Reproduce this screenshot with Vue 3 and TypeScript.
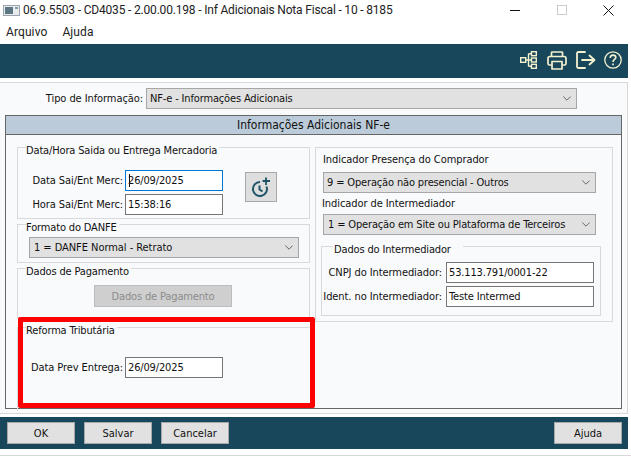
<script setup lang="ts">
const menus: string[] = ['Arquivo', 'Ajuda']
</script>

<template>
  <div class="win">
    <header class="titlebar">
      <svg class="appicon" width="17" height="11" viewBox="0 0 17 11">
        <rect x="0.5" y="0.5" width="16" height="10" fill="#e8ecef" stroke="#9aa4aa" />
        <rect x="2" y="2" width="8" height="7" fill="#5d7683" />
        <rect x="12" y="2" width="3" height="2" fill="#8a9aa3" />
      </svg>
      <span class="title">06.9.5503 - CD4035 - 2.00.00.198 - Inf Adicionais Nota Fiscal - 10 - 8185</span>
      <div class="controls">
        <svg width="11" height="11" viewBox="0 0 11 11"><path d="M0 5.5H10" stroke="#111" fill="none" /></svg>
        <svg width="10" height="10" viewBox="0 0 10 10"><rect x="0.5" y="0.5" width="9" height="9" stroke="#ccc" fill="none" /></svg>
        <svg width="11" height="11" viewBox="0 0 11 11"><path d="M0.5 0.5L10.5 10.5M10.5 0.5L0.5 10.5" stroke="#111" fill="none" /></svg>
      </div>
    </header>

    <nav class="menu">
      <span v-for="m in menus" :key="m">{{ m }}</span>
    </nav>

    <div class="toolbar">
      <svg class="ic-map" width="17" height="18" viewBox="0 0 17 18" fill="none" stroke="#f4f1cf" stroke-width="1.4">
        <rect x="0.7" y="6.7" width="5" height="4.6" />
        <rect x="11.5" y="0.7" width="4.8" height="4" />
        <rect x="11.5" y="7" width="4.8" height="4" />
        <rect x="11.5" y="13.3" width="4.8" height="4" />
        <path d="M5.7 9H11.5M8.5 2.7V15.3M8.5 2.7H11.5M8.5 15.3H11.5" />
      </svg>
      <svg class="ic-print" width="20" height="19" viewBox="0 0 20 19" fill="none" stroke="#f4f1cf" stroke-width="1.7" stroke-linejoin="round">
        <path d="M4.5 5.5V1.5Q4.5 1 5 1H15Q15.5 1 15.5 1.5V5.5" />
        <path d="M4.5 14H2.5Q1 14 1 12.500V7.500Q1 5.500 3 5.500H17Q19 5.500 19 7.500V12.500Q19 14 17.500 14H15.500" />
        <rect x="5" y="10.500" width="10" height="7.500" />
      </svg>
      <svg width="20" height="18" viewBox="0 0 20 18" fill="none" stroke="#f4f1cf" stroke-width="1.8" stroke-linecap="round" stroke-linejoin="round">
        <path d="M9 1H2.500Q1 1 1 2.500V15.500Q1 17 2.500 17H9" />
        <path d="M6 9H18M13.500 4.500L18.500 9L13.500 13.500" />
      </svg>
      <svg width="18" height="18" viewBox="0 0 18 18" fill="none" stroke="#f4f1cf" stroke-width="1.3">
        <circle cx="9" cy="9" r="8.200" />
        <path d="M6.200 7Q6.300 4.100 9 4.100Q11.800 4.100 11.800 6.500C11.800 8.500 9 8.500 9 11" stroke-width="1.600" />
        <path d="M9 12.500V14.300" stroke-width="1.700" />
      </svg>
    </div>

    <main class="body">
      <div class="tipo">
        <label>Tipo de Informação:</label>
        <div class="combo combo-tipo">
          <span>NF-e - Informações Adicionais</span>
          <svg class="chev" width="8" height="5" viewBox="0 0 8 5"><path d="M0.300 0.500L4 4.200L7.700 0.500" /></svg>
        </div>
      </div>

      <section class="panel">
        <h2 class="panel-head">Informações Adicionais NF-e</h2>
        <div class="columns">
          <div class="col-left">
            <div class="group g-data">
              <span class="legend">Data/Hora Saida ou Entrega Mercadoria</span>
              <div class="data-fields">
                <div class="field">
                  <label>Data Sai/Ent Merc:</label>
                  <div class="input focused"><i class="caret"></i>26/09/2025</div>
                </div>
                <div class="field">
                  <label>Hora Sai/Ent Merc:</label>
                  <div class="input">15:38:16</div>
                </div>
              </div>
              <button class="clock-btn" type="button" aria-label="Agora">
                <svg width="20" height="20" viewBox="0 0 20 20" fill="none" stroke="#1e5468" stroke-width="2">
                  <path d="M15.500 9.500A7 7 0 1 1 9 5" />
                  <path d="M8.500 8.500V12.500L11.500 14.500" />
                  <path d="M15 0.500V8M11.500 4H19" stroke-width="1.800" />
                </svg>
              </button>
            </div>

            <div class="group g-formato">
              <span class="legend">Formato do DANFE</span>
              <div class="combo combo-formato">
                <span>1 = DANFE Normal - Retrato</span>
                <svg class="chev" width="8" height="5" viewBox="0 0 8 5"><path d="M0.300 0.500L4 4.200L7.700 0.500" /></svg>
              </div>
            </div>

            <div class="group g-pag">
              <span class="legend">Dados de Pagamento</span>
              <button class="btn-disabled" type="button" disabled>Dados de Pagamento</button>
            </div>

            <div class="group g-reforma">
              <span class="legend">Reforma Tributária</span>
              <div class="field field-reforma">
                <label>Data Prev Entrega:</label>
                <div class="input">26/09/2025</div>
              </div>
            </div>
            <div class="highlight"></div>
          </div>

          <div class="group g-right">
            <label class="cap cap1">Indicador Presença do Comprador</label>
            <div class="combo combo-right">
              <span>9 = Operação não presencial - Outros</span>
              <svg class="chev" width="8" height="5" viewBox="0 0 8 5"><path d="M0.300 0.500L4 4.200L7.700 0.500" /></svg>
            </div>
            <label class="cap cap2">Indicador de Intermediador</label>
            <div class="combo combo-right combo-site">
              <span>1 = Operação em Site ou Plataforma de Terceiros</span>
              <svg class="chev" width="8" height="5" viewBox="0 0 8 5"><path d="M0.300 0.500L4 4.200L7.700 0.500" /></svg>
            </div>
            <div class="group g-inter">
              <span class="legend">Dados do Intermediador</span>
              <div class="field inter-field">
                <label>CNPJ do Intermediador:</label>
                <div class="input wide">53.113.791/0001-22</div>
              </div>
              <div class="field inter-field">
                <label>Ident. no Intermediador:</label>
                <div class="input wide">Teste Intermed</div>
              </div>
            </div>
          </div>
        </div>
      </section>
    </main>

    <footer class="footer">
      <button class="btn" type="button">OK</button>
      <button class="btn" type="button">Salvar</button>
      <button class="btn" type="button">Cancelar</button>
      <button class="btn btn-help" type="button">Ajuda</button>
    </footer>
  </div>
</template>

<style>
html, body { margin: 0; background: #fff; overflow: hidden; }
</style>

<style scoped>
.win {
  width: 631px;
  height: 456px;
  box-sizing: border-box;
  border-bottom: 1px solid #d8d8d8;
  background: #fff;
  font-family: "DejaVu Sans Condensed", "DejaVu Sans", sans-serif;
  font-size: 11px;
  letter-spacing: -0.15px;
  color: #111;
  overflow: hidden;
}
label { white-space: nowrap; letter-spacing: -0.08px; }
.titlebar { height: 20px; display: flex; align-items: center; padding-left: 3px; }
.title { margin-left: 3px; font-family: Roboto, sans-serif; font-size: 12px; letter-spacing: -0.18px; color: #222; white-space: nowrap; }
.controls { margin-left: auto; display: flex; align-items: center; padding-right: 17px; gap: 36px; }
.menu { height: 23px; display: flex; align-items: center; gap: 15px; padding-left: 6px; font-family: Roboto, sans-serif; font-size: 12px; letter-spacing: 0.1px; color: #222; }
.toolbar {
  width: 628px; height: 34px; margin-top: 1px; background: #18475b;
  display: flex; align-items: center; justify-content: flex-end; gap: 8px;
  padding: 0 6px 2px 0; box-sizing: border-box;
}
.ic-map { margin-right: 2px; }
.ic-print { margin-right: 1px; }
.body {
  width: 628px; height: 332px; margin-top: 4px; box-sizing: border-box;
  background: #f9fafc; border: 1px solid #d8d8d8; border-left: 0;
  padding: 5px 6px 0 5px;
}
.tipo { display: flex; align-items: center; justify-content: flex-end; height: 21px; gap: 3px; padding-right: 44px; }
.combo {
  height: 21px; box-sizing: border-box; background: #e1e1e1; border: 1px solid #a6a6a6;
  display: flex; align-items: center; justify-content: space-between; padding: 0 5px 0 3px; white-space: nowrap;
}
.combo-tipo { width: 431px; }
.chev { fill: none; stroke: #666; flex: none; }
.panel {
  margin-top: 6px; width: 617px; height: 294px; box-sizing: border-box;
  border: 1px solid #666; display: flex; flex-direction: column;
}
.panel-head {
  margin: 0; height: 18px; flex: none; background: #bccbd9; border-bottom: 1px solid #666;
  font: inherit; font-size: 12px; letter-spacing: 0; display: flex; align-items: center; justify-content: center;
}
.columns { display: flex; padding: 12px 7px 0 11px; gap: 5px; }
.col-left { width: 293px; display: flex; flex-direction: column; gap: 5px; position: relative; }
.group { position: relative; box-sizing: border-box; border: 1px solid #d8d9dc; }
.legend {
  position: absolute; top: -4px; left: 8px; line-height: 13px; padding-right: 2px;
  background: #f9fafc; white-space: nowrap;
}
.g-data { height: 72px; display: flex; padding: 22px 0 0 0; }
.data-fields { width: 205px; display: flex; flex-direction: column; gap: 3px; }
.field { display: flex; align-items: center; justify-content: flex-end; gap: 2px; }
.input {
  width: 98px; height: 21px; box-sizing: border-box; background: #fff; border: 1px solid #767676;
  display: flex; align-items: center; padding-left: 2px; position: relative; white-space: nowrap;
}
.input.focused { border-color: #0078d7; }
.caret { position: absolute; left: 3px; top: 3px; height: 13px; width: 1px; background: #111; }
.clock-btn {
  width: 32px; height: 30px; margin: 2px 0 0 22px; padding: 0; background: #dedede; border: 1px solid #a8a8a8;
  display: flex; align-items: center; justify-content: center;
}
.g-formato { height: 39px; padding: 12px 0 0 11px; }
.combo-formato { width: 270px; padding-left: 4px; letter-spacing: -0.05px; }
.g-pag { height: 51px; padding: 16px 0 0 76px; }
.btn-disabled {
  width: 138px; height: 22px; padding: 0; font: inherit; letter-spacing: -0.15px; color: #8c8c8c; background: #cfcfcf; border: 1px solid #bdbdbd;
}
.g-reforma { height: 84px; margin-top: 3px; padding: 29px 0 0 0; border-right-color: transparent; border-bottom-color: transparent; }
.field-reforma { width: 205px; }
.highlight {
  position: absolute; left: 1px; top: 170px; width: 297px; height: 91px;
  box-sizing: border-box; border: 5px solid #f00; border-radius: 2px; pointer-events: none;
}
.g-right { width: 298px; height: 175px; padding: 4px 0 0 7px; }
.cap { display: block; height: 20px; line-height: 16px; }
.cap2 { margin-left: -1px; height: 11px; margin-top: 5px; line-height: 11px; margin-bottom: 5px; }
.combo-right { width: 273px; }
.combo-site span { padding-left: 1px; }
.g-inter { margin: 11px 0 0 -2px; width: 280px; height: 70px; padding: 15px 6px 0 0; display: flex; flex-direction: column; gap: 3px; }
.g-inter .legend { left: 11px; padding: 0 12px 0 1px; }
.inter-field { gap: 4px; }
.input.wide { width: 148px; }
.footer {
  width: 628px; height: 32px; margin-top: 3px; box-sizing: border-box; background: #18475b;
  display: flex; align-items: center; gap: 9px; padding: 0 6px 0 7px;
}
.btn {
  width: 68px; height: 22px; padding: 0; font: inherit; letter-spacing: 0; color: #111; background: #e1e1e1; border: 1px solid #a8a8a8;
}
.btn-help { margin-left: auto; }
</style>
